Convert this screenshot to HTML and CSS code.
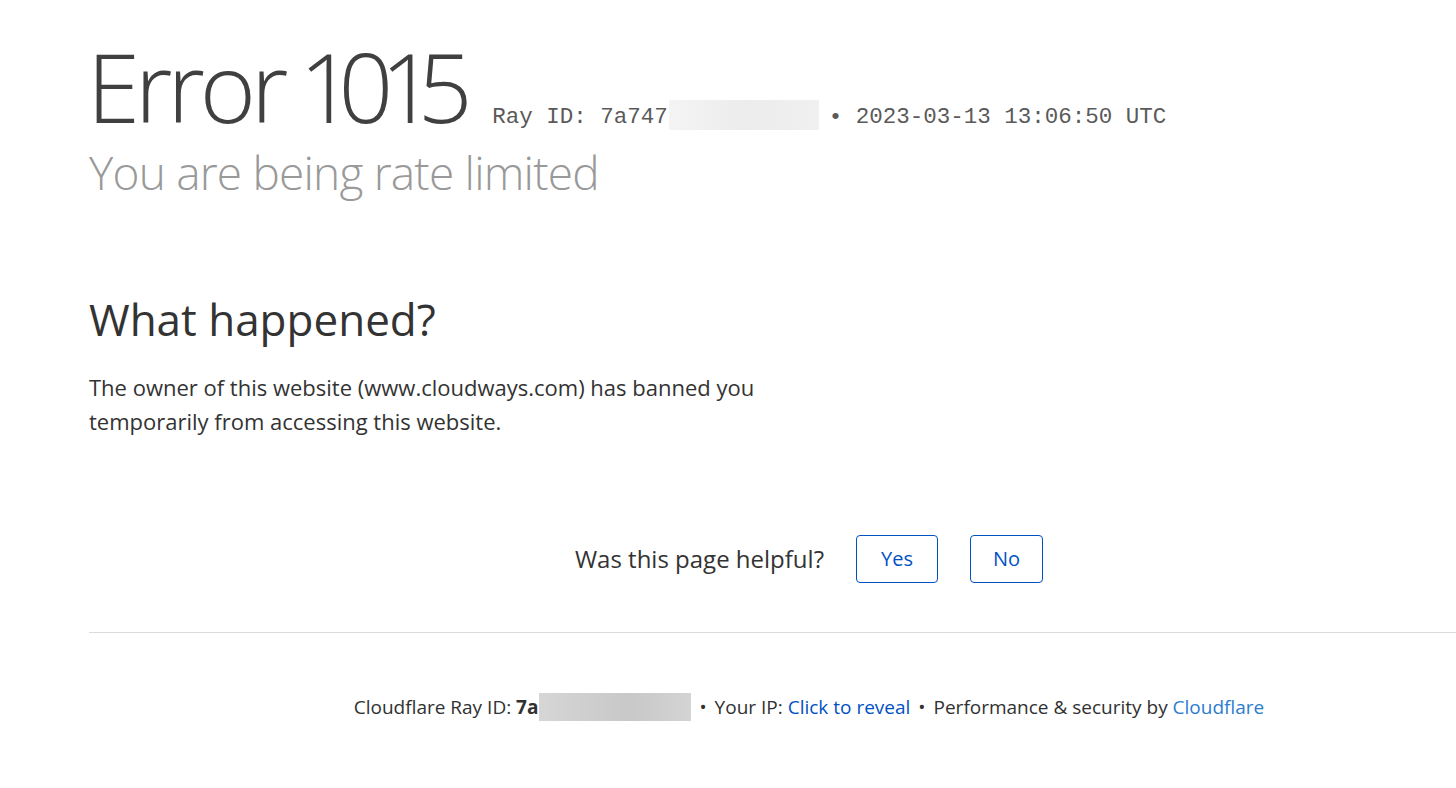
FILE: index.html
```html
<!DOCTYPE html>
<html lang="en">
<head>
  <meta charset="UTF-8" />
  <meta name="viewport" content="width=device-width, initial-scale=1" />
  <title>Access denied | www.cloudways.com used Cloudflare to restrict access</title>
  <link rel="stylesheet" href="styles.css">
</head>
<body>

<div class="cf-wrapper">
  <header class="cf-header">
    <h1>
      <span class="cf-error-type">Error</span>
      <span class="cf-error-code">1015</span>
      <small class="cf-ray">Ray ID: 7a747<span class="cf-blur cf-blur-light"></span>&bull; 2023-03-13 13:06:50 UTC</small>
    </h1>
    <h2 class="cf-subheadline">You are being rate limited</h2>
  </header>

  <section class="cf-section">
    <h2>What happened?</h2>
    <p>The owner of this website (www.cloudways.com) has banned you temporarily from accessing this website.</p>
  </section>

  <div class="cf-feedback">
    <span>Was this page helpful?</span>
    <button class="cf-btn cf-btn-yes">Yes</button>
    <button class="cf-btn cf-btn-no">No</button>
  </div>

  <footer class="cf-footer">
    <span>Cloudflare Ray ID: <strong>7a</strong><span class="cf-blur cf-blur-dark"></span></span>
    <span class="cf-sep">&bull;</span>
    <span>Your IP: <a href="#" class="cf-link">Click to reveal</a></span>
    <span class="cf-sep">&bull;</span>
    <span>Performance &amp; security by <a href="#" class="cf-link cf-link-light">Cloudflare</a></span>
  </footer>
</div>

</body>
</html>
```

FILE: styles.css
```css
html, body {
  margin: 0;
  padding: 0;
  background: #fff;
  overflow: hidden;
}
body {
  font-family: "Open Sans", "Noto Sans", sans-serif;
  color: #313131;
}
.cf-wrapper {
  width: 1440px;
  margin-left: 89px;
}
.cf-header h1 {
  margin: 0;
  padding-top: 38px;
  font-size: 96px;
  font-weight: 300;
  line-height: 1;
  color: #404040;
  white-space: nowrap;
}
.cf-error-type {
  margin-left: -2px;
  letter-spacing: -5px;
}
.cf-error-code {
  margin-left: -2px;
  letter-spacing: -6px;
  font-feature-settings: "pnum";
}
.cf-ray {
  font-family: "Liberation Mono", "DejaVu Sans Mono", monospace;
  font-size: 22.5px;
  font-weight: 400;
  color: #5a5a5a;
  margin-left: 2px;
  letter-spacing: 0;
}
.cf-blur {
  display: inline-block;
  vertical-align: middle;
}
.cf-blur-light {
  width: 150px;
  height: 30px;
  margin: -4px 10px 0 1px;
  background: linear-gradient(90deg, #f4f4f4, #ececec 50%, #f0f0f0);
}
.cf-blur-dark {
  width: 152px;
  height: 28px;
  margin: -4px 0 0 1px;
  background: linear-gradient(90deg, #d6d6d6, #c8c8c8 60%, #d4d4d4);
}
.cf-subheadline {
  margin: 11px 0 0;
  font-size: 46px;
  font-weight: 300;
  line-height: 1.2;
  letter-spacing: -0.8px;
  color: #999;
}
.cf-section {
  margin-top: 93px;
  width: 700px;
}
.cf-section h2 {
  margin: 0 0 24px;
  font-size: 44px;
  font-weight: 400;
  line-height: 1.2;
  color: #333;
}
.cf-section p {
  margin: 0;
  font-size: 22px;
  line-height: 34px;
  color: #333;
}
.cf-feedback {
  display: flex;
  align-items: center;
  justify-content: center;
  gap: 32px;
  margin-top: 97px;
  padding-bottom: 49px;
  border-bottom: 1px solid #dcdcdc;
  font-size: 24px;
  color: #333;
}
.cf-btn {
  height: 48px;
  padding: 0 24px;
  font-family: inherit;
  font-size: 20px;
  color: #0051c3;
  background: #fff;
  border: 1px solid #0051c3;
  border-radius: 4px;
}
.cf-btn-no {
  padding: 0 22px;
}
.cf-footer {
  display: flex;
  justify-content: center;
  align-items: center;
  gap: 8px;
  margin-top: 61px;
  font-size: 19px;
  color: #313131;
}
.cf-footer strong {
  font-weight: 700;
}
.cf-link {
  color: #0051c3;
  text-decoration: none;
}
.cf-link-light {
  color: #2c7cd0;
}
```
